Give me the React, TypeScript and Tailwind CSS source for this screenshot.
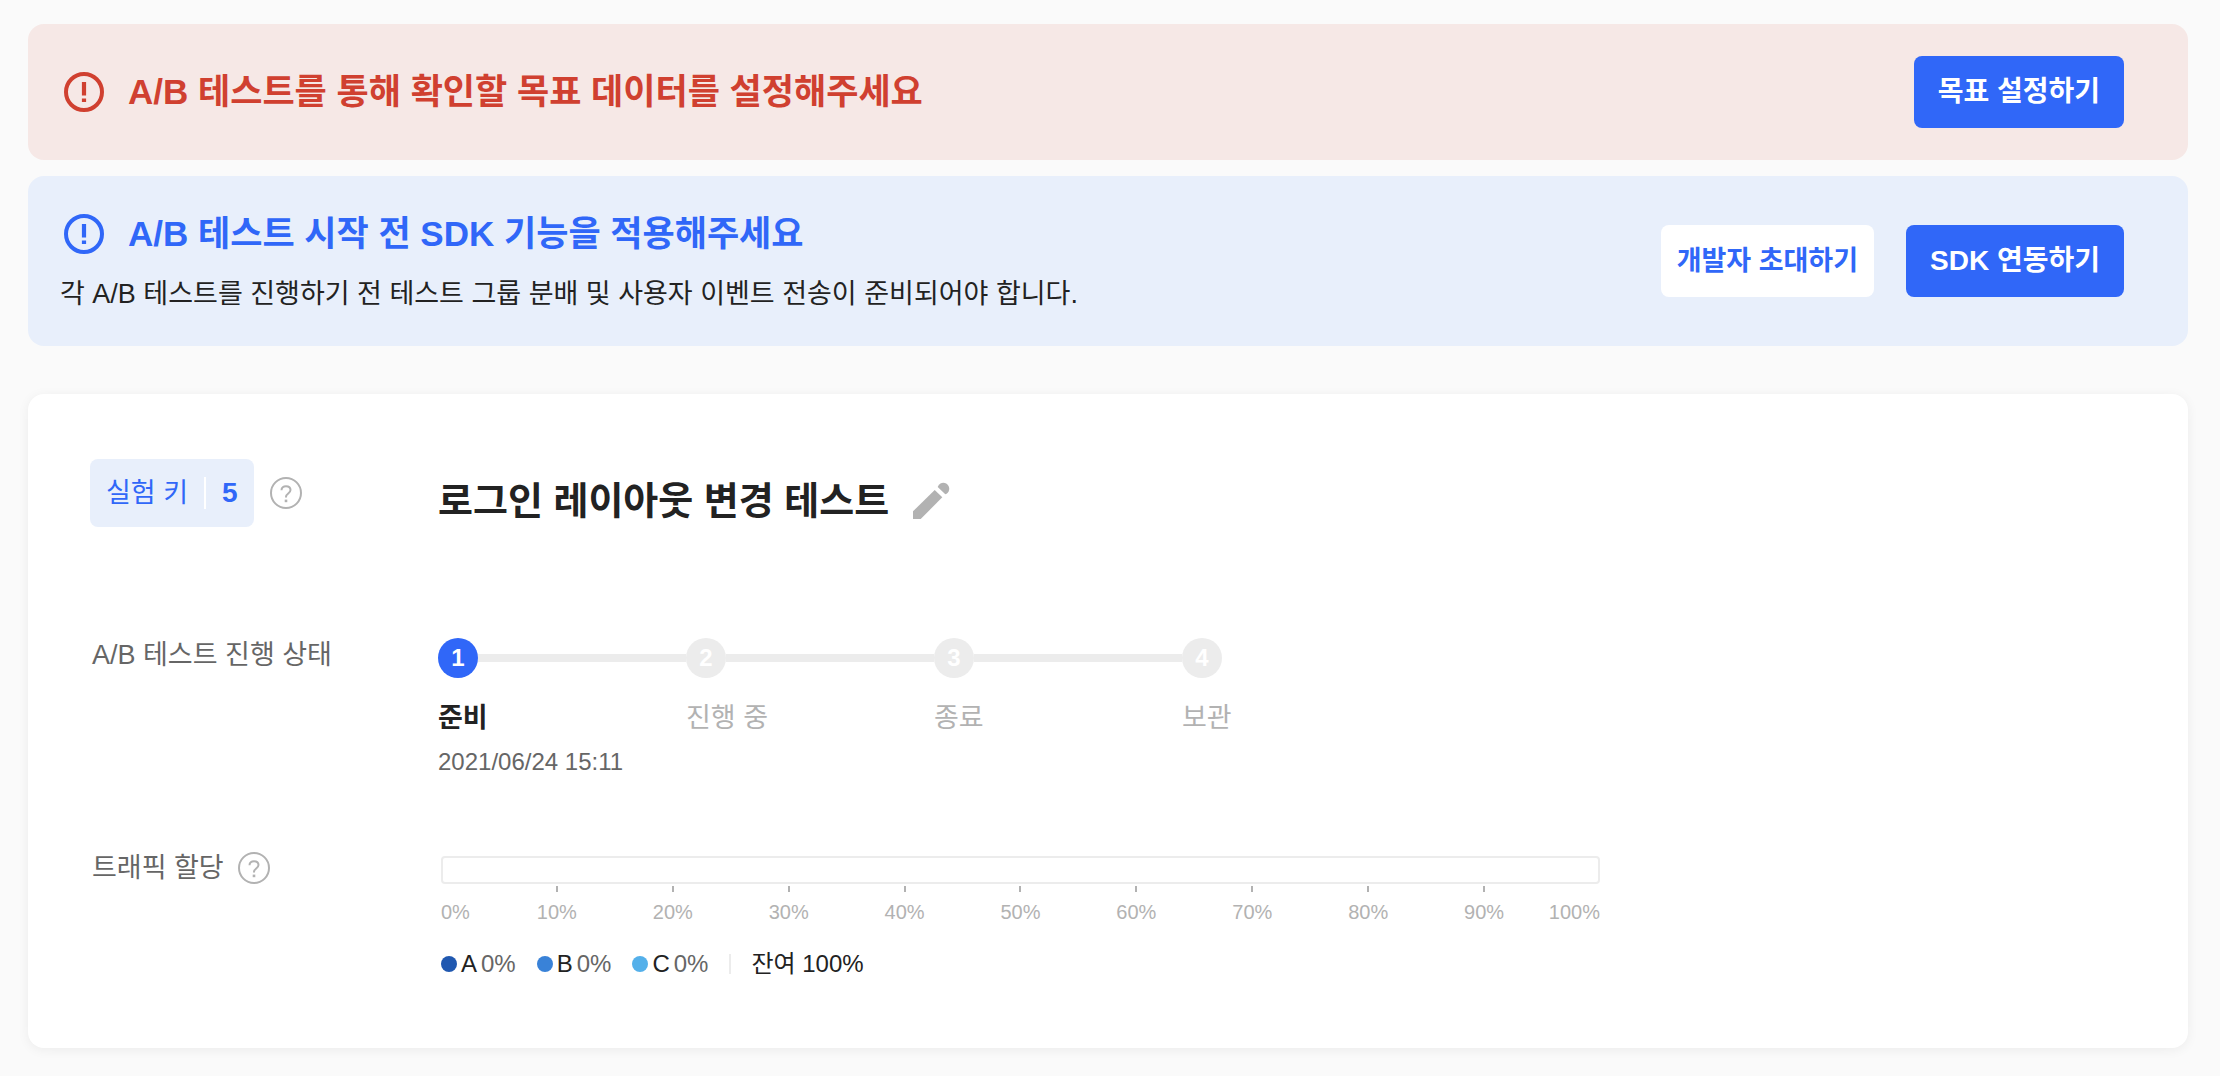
import type { ReactNode } from 'react'

const STEPS = ['준비', '진행 중', '종료', '보관']

const GROUPS = [
  { name: 'A', dot: 'bg-[#2058b0]' },
  { name: 'B', dot: 'bg-[#3982d8]' },
  { name: 'C', dot: 'bg-[#54b0ea]' },
]

const TICKS = [10, 20, 30, 40, 50, 60, 70, 80, 90]

function AlertIcon() {
  return (
    <svg viewBox="0 0 40 40" className="size-10 shrink-0" fill="none" stroke="currentColor">
      <circle cx="20" cy="20" r="18" strokeWidth="4" />
      <path d="M20 10v13.500M20 26.500v3.600" strokeWidth="4.200" />
    </svg>
  )
}

function HelpIcon() {
  return (
    <svg viewBox="0 0 32 32" className="size-8" fill="none" stroke="currentColor">
      <circle cx="16" cy="16" r="15" strokeWidth="2" />
      <path d="M11.5 13.200c0-2.300 1.900-4 4.500-4s4.500 1.600 4.500 3.900c0 3.200-4.500 3.500-4.500 6.700v.7" strokeWidth="2" />
      <path d="M16 22.600v2.600" strokeWidth="2.600" />
    </svg>
  )
}

function HelpButton({ label }: { label: string }) {
  return (
    <button type="button" aria-label={label} className="text-[#b2b2b2] cursor-pointer">
      <HelpIcon />
    </button>
  )
}

function PrimaryButton({ children }: { children: ReactNode }) {
  return (
    <button
      type="button"
      className="h-18 px-6 rounded-lg bg-[#3067f8] text-white text-[28px] font-bold whitespace-nowrap cursor-pointer"
    >
      {children}
    </button>
  )
}

export default function App() {
  return (
    <main className="min-h-screen bg-[#fafafa] pl-7 pr-8 pt-6 pb-7 text-[#222] font-['Liberation_Sans','Noto_Sans_CJK_KR',sans-serif]">
      {/* 목표 미설정 경고 */}
      <section className="flex items-center justify-between rounded-2xl bg-[#f6e8e6] py-8 pl-9 pr-16">
        <div className="flex items-center gap-6 text-[#d04030]">
          <AlertIcon />
          <h2 className="text-[35px] leading-12 font-bold">A/B 테스트를 통해 확인할 목표 데이터를 설정해주세요</h2>
        </div>
        <PrimaryButton>목표 설정하기</PrimaryButton>
      </section>

      {/* SDK 연동 안내 */}
      <section className="mt-4 flex items-center justify-between rounded-2xl bg-[#e8effb] py-[34px] pl-8 pr-16">
        <div>
          <div className="flex items-center gap-6 pl-1 text-[#3067f8]">
            <AlertIcon />
            <h2 className="text-[35px] leading-12 font-bold">A/B 테스트 시작 전 SDK 기능을 적용해주세요</h2>
          </div>
          <p className="mt-[18px] text-[27px] leading-9">
            각 A/B 테스트를 진행하기 전 테스트 그룹 분배 및 사용자 이벤트 전송이 준비되어야 합니다.
          </p>
        </div>
        <div className="flex gap-8">
          <button
            type="button"
            className="h-18 px-4 rounded-lg bg-white text-[#3067f8] text-[27px] font-bold whitespace-nowrap cursor-pointer"
          >
            개발자 초대하기
          </button>
          <PrimaryButton>SDK 연동하기</PrimaryButton>
        </div>
      </section>

      <section className="mt-12 grid grid-cols-[348px_1fr] rounded-2xl bg-white pl-[62px] pr-16 pt-[65px] pb-16 shadow-[0_2px_12px_rgba(0,0,0,0.06)]">
        <div className="flex items-center gap-4 h-17">
          <div className="flex items-center h-17 px-4 rounded-lg bg-[#e8effb] text-[#3067f8]">
            <span className="text-[27px]">실험 키</span>
            <span className="mx-4 h-8 w-0.5 bg-white" />
            <span className="text-[28px] font-bold">5</span>
          </div>
          <HelpButton label="실험 키 도움말" />
        </div>
        <div className="flex items-center gap-6 pt-4">
          <h1 className="text-[38px] leading-13 font-bold">로그인 레이아웃 변경 테스트</h1>
          <button type="button" aria-label="이름 수정" className="text-[#b2b2b2] cursor-pointer">
            <svg viewBox="0 0 36 36" className="size-9 overflow-visible" fill="currentColor">
              <path d="M0 28.300L21.700 7l7.600 7.300L7.700 36H0z" />
              <path d="M24.700 4A5.900 5.900 0 1 1 32.300 11.300z" />
            </svg>
          </button>
        </div>

        {/* 진행 상태 */}
        <h3 className="mt-27 pl-0.5 text-[27px] leading-10 text-[#666]">A/B 테스트 진행 상태</h3>
        <ol className="mt-[111px] flex">
          {STEPS.map((step, i) => (
            <li key={step} className="w-62">
              <div className="flex items-center">
                <span
                  className={`flex size-10 items-center justify-center rounded-full text-2xl font-bold text-white ${
                    i === 0 ? 'bg-[#3067f8]' : 'bg-[#ececec]'
                  }`}
                >
                  {i + 1}
                </span>
                {i < STEPS.length - 1 && <span className="h-2 flex-1 bg-[#ececec]" />}
              </div>
              <p className={`mt-5 text-[27px] leading-10 ${i === 0 ? 'font-bold' : 'text-[#b2b2b2]'}`}>{step}</p>
              {i === 0 && <time className="block mt-2 text-2xl text-[#666]">2021/06/24 15:11</time>}
            </li>
          ))}
        </ol>

        {/* 트래픽 할당 */}
        <div className="mt-18 flex h-9 items-center gap-3.5 pl-0.5 text-[#666]">
          <h3 className="text-[27px]">트래픽 할당</h3>
          <HelpButton label="트래픽 할당 도움말" />
        </div>
        <div className="mt-[78px] w-full max-w-[1162px] pl-[3px]">
          <div className="h-7 rounded border-2 border-[#ececec]" />
          <div className="mt-0.5 grid grid-cols-20 text-xl leading-6 text-[#b2b2b2]">
            <span className="pt-3.5">0%</span>
            {TICKS.map((tick) => (
              <span key={tick} className="col-span-2 flex flex-col items-center">
                <span className="mb-2 h-1.5 w-0.5 bg-[#b2b2b2]" />
                {tick}%
              </span>
            ))}
            <span className="pt-3.5 justify-self-end">100%</span>
          </div>
          <div className="mt-5 flex h-10 items-center text-2xl">
            {GROUPS.map((group) => (
              <span key={group.name} className="mr-[21px] flex items-center gap-1">
                <span className={`size-4 rounded-full ${group.dot}`} />
                {group.name}
                <span className="text-[#666]">0%</span>
              </span>
            ))}
            <span className="mr-5 h-5 w-0.5 bg-[#ececec]" />
            잔여 100%
          </div>
        </div>
      </section>
    </main>
  )
}
